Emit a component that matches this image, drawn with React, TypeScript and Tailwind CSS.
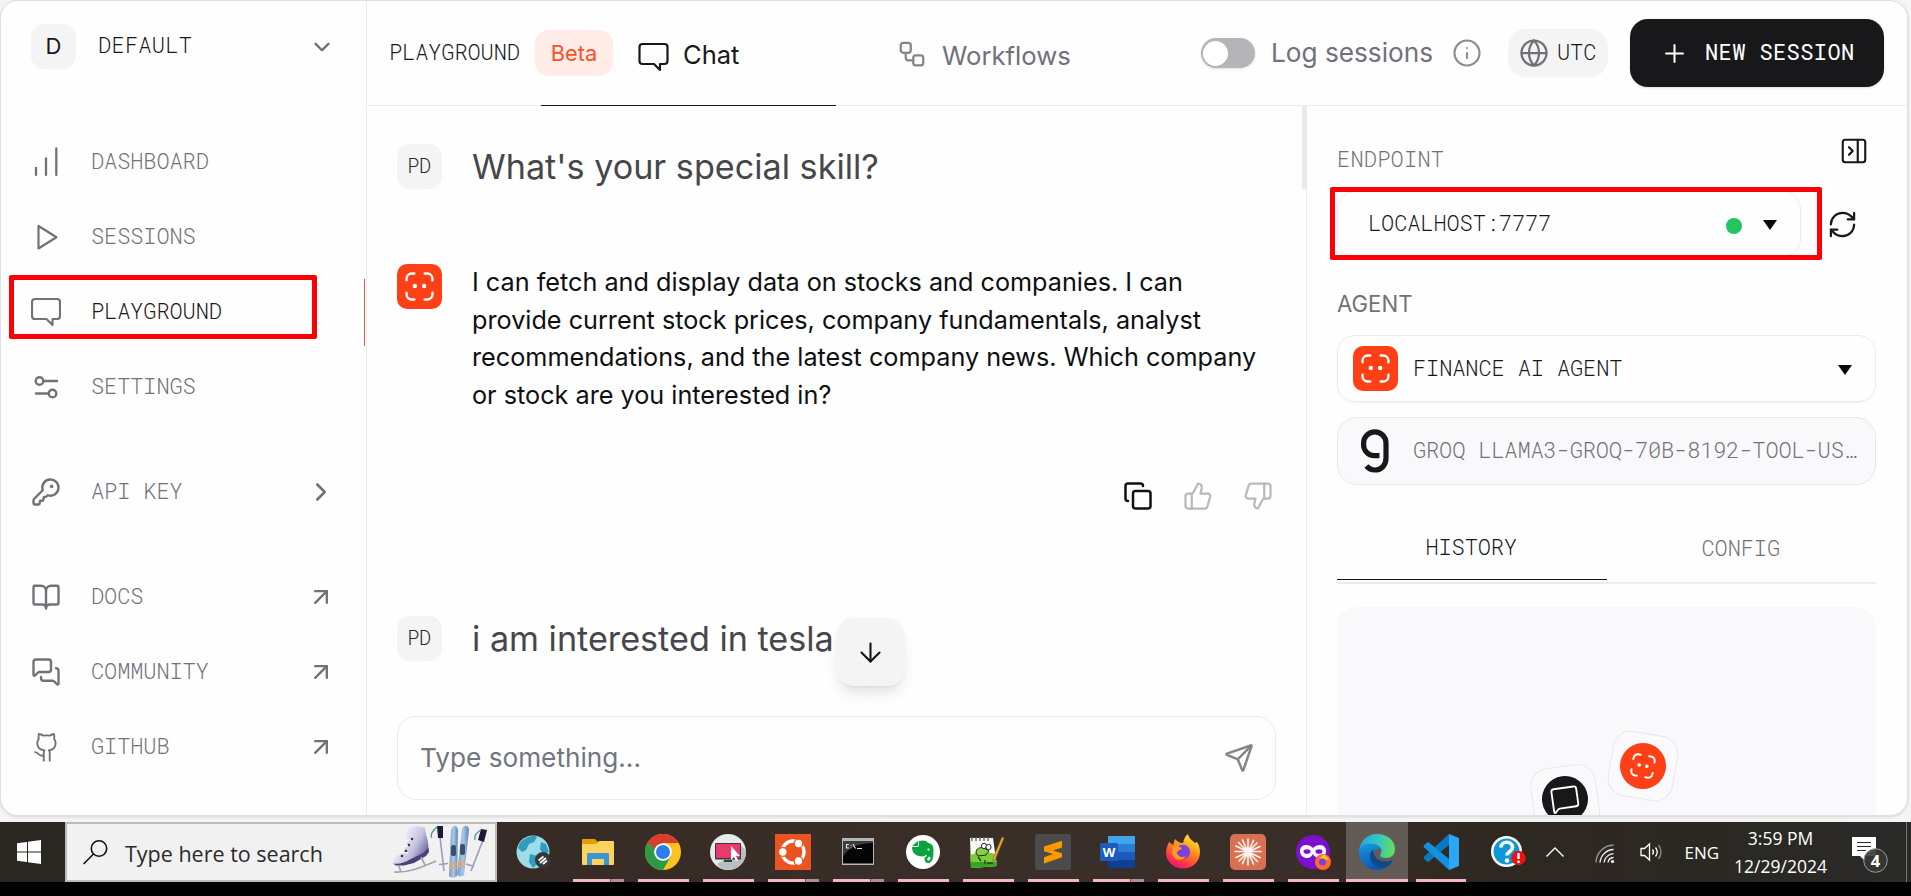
import type { ReactNode } from "react";
import {
  ArrowDown, ArrowUpRight, BookOpen, ChevronDown, ChevronRight, Copy, Globe, Info, KeyRound,
  MessagesSquare, MessageSquare, PanelRightClose, Plus, RefreshCw, Send, ThumbsDown, ThumbsUp, Workflow,
} from "lucide-react";

const mono = "[font-family:'Roboto_Mono','Liberation_Mono',monospace] font-[350] text-[22px] tracking-[-0.12px] leading-none whitespace-nowrap";

function FaceGlyph({ className }: { className: string }) {
  return (
    <svg viewBox="0 0 28 28" className={className} fill="none" stroke="white" strokeWidth="2.3" strokeLinecap="round">
      <path d="M1.5 8V6.5a5 5 0 0 1 5-5H9M19 1.5h2.500a5 5 0 0 1 5 5V8M26.500 20v1.500a5 5 0 0 1-5 5H19M9 26.500H6.500a5 5 0 0 1-5-5V20" />
      <circle cx="9.500" cy="13.500" r="2.100" fill="white" stroke="none" />
      <circle cx="18.500" cy="13.500" r="2.100" fill="white" stroke="none" />
    </svg>
  );
}

function AgentBadge() {
  return (
    <div className="flex h-[45px] w-[45px] shrink-0 items-center justify-center rounded-[10px] bg-[#ff4017]">
      <FaceGlyph className="h-[29px] w-[29px]" />
    </div>
  );
}

function Bubble({ className }: { className: string }) {
  return (
    <svg viewBox="0 0 30 30" className={className} fill="none" stroke="currentColor" strokeWidth="2.2" strokeLinejoin="round" strokeLinecap="round">
      <path d="M4 2h22a3 3 0 0 1 3 3v14a3 3 0 0 1-3 3h-4.500v6l-6-6H4a3 3 0 0 1-3-3V5a3 3 0 0 1 3-3Z" />
    </svg>
  );
}

function Bars() {
  return (
    <svg viewBox="0 0 30 30" className="h-[30px] w-[30px]" fill="none" stroke="currentColor" strokeWidth="2.3" strokeLinecap="round">
      <path d="M5 21v7M15 11.500V28M25.300 1.500V28" />
    </svg>
  );
}

function PlayOutline() {
  return (
    <svg viewBox="0 0 30 30" className="h-[30px] w-[30px]" fill="none" stroke="currentColor" strokeWidth="2.200" strokeLinejoin="round">
      <path d="M7.500 4v22.500L25.500 15.300Z" />
    </svg>
  );
}

function Sliders() {
  return (
    <svg viewBox="0 0 30 30" className="h-[30px] w-[30px]" fill="none" stroke="currentColor" strokeWidth="2.4" strokeLinecap="round">
      <circle cx="8.500" cy="9" r="3.800" />
      <path d="M12.300 9H26M5 21.500h13" />
      <circle cx="21.500" cy="21.500" r="3.800" />
    </svg>
  );
}

function Octocat() {
  return (
    <svg viewBox="0 0 24 24" className="h-[30px] w-[30px]" fill="none" stroke="currentColor" strokeWidth="1.500" strokeLinecap="round" strokeLinejoin="round">
      <path d="M10.200 23v-6.500c0-1 .2-1.400.6-1.800C7 14.300 5 12.300 5 8.800c0-1.500.5-2.500 1.200-3.300C5.900 4.300 6 3 6.300 1.600c1.500.1 2.600.7 3.600 1.300a13 13 0 0 1 5 0c1-.6 2-1.200 3.500-1.300.4 1.400.4 2.700.1 3.900.8.8 1.200 1.800 1.200 3.300 0 3.500-2 5.500-5.400 5.900.4.400.7.800.7 1.800V23M10.200 18.800c-2 .500-3.300-.1-4.200-1.200-.7-.9-1.200-1.400-2.700-1.500" />
    </svg>
  );
}

function Triangle() {
  return <svg viewBox="0 0 14 10" className="h-[10px] w-[14px] shrink-0" fill="#09090b"><path d="M0 0h14L7 10Z" /></svg>;
}

function NavRow({ icon, label, end, active, space = "" }: { icon: ReactNode; label: string; end?: ReactNode; active?: boolean; space?: string }) {
  return (
    <div className={`relative flex h-[75px] shrink-0 items-center pr-[35px] pl-[30px] text-[#71717a] ${space}`}>
      <span className="flex w-[30px] shrink-0">{icon}</span>
      <span className={`ml-[30px] flex-1 pb-px ${mono} ${active ? "text-[#18181b]" : ""}`}>{label}</span>
      {end}
      {active && <span className="absolute top-[5px] right-px h-[67px] w-[1.5px] bg-[#dd5a3a]" />}
      {active && <span className="absolute top-px left-[8px] h-[64px] w-[308px] rounded-[2px] border-[5px] border-[#fb0007]" />}
    </div>
  );
}

const ne = <ArrowUpRight className="-mr-1 h-7 w-7" strokeWidth={2} />;

function Sidebar() {
  return (
    <aside className="flex w-[366px] shrink-0 flex-col border-r border-[#ececee]">
      <div className="mt-[23px] flex h-[45px] items-center pr-[33px] pl-[30px]">
        <div className="flex h-[45px] w-[45px] items-center justify-center rounded-[13px] bg-[#f4f4f5] font-['Inter',sans-serif] text-[22px] text-[#18181b]">D</div>
        <span className={`ml-[22px] flex-1 text-[#18181b] ${mono} pb-1 [letter-spacing:0.25px]`}>DEFAULT</span>
        <ChevronDown className="-mr-[2px] h-[26px] w-[26px] text-[#6b6b73]" strokeWidth={2.200} />
      </div>
      <nav className="mt-[55px] flex flex-col">
        <NavRow icon={<Bars />} label="DASHBOARD" />
        <NavRow icon={<PlayOutline />} label="SESSIONS" />
        <NavRow icon={<Bubble className="h-[30px] w-[30px]" />} label="PLAYGROUND" active />
        <NavRow icon={<Sliders />} label="SETTINGS" />
        <NavRow space="mt-[30px]" icon={<KeyRound className="h-[30px] w-[30px]" strokeWidth={1.900} />} label="API KEY" end={<ChevronRight className="-mr-[5px] h-[30px] w-[30px]" strokeWidth={2.100} />} />
        <NavRow space="mt-[30px]" icon={<BookOpen className="h-[30px] w-[30px]" strokeWidth={1.900} />} label="DOCS" end={ne} />
        <NavRow icon={<MessagesSquare className="h-[30px] w-[30px]" strokeWidth={1.900} />} label="COMMUNITY" end={ne} />
        <NavRow icon={<Octocat />} label="GITHUB" end={ne} />
      </nav>
    </aside>
  );
}

function Header() {
  return (
    <header className="relative flex h-[105px] shrink-0 items-start border-b border-[#ececee] pl-[22px] font-['Inter',sans-serif]">
      <span className={`mt-[40px] w-[146px] text-[#18181b] ${mono}`}>PLAYGROUND</span>
      <span className="mt-[29px] flex h-[46px] w-[78px] items-center justify-center rounded-[14px] bg-[#ffece7] text-[21.800px] text-[#f9502b]">Beta</span>
      <Bubble className="mt-[41px] ml-[25px] h-[30px] w-[31px] text-[#18181b]" />
      <span className="mt-[35px] ml-[14px] w-[200px] text-[25.5px] leading-[38px] text-[#18181b]">Chat</span>
      <Workflow className="mt-[38px] ml-[14px] h-[30px] w-[30px] text-[#71717a] opacity-85" strokeWidth={1.800} />
      <span className="mt-[36px] ml-[15px] w-[259px] text-[25.700px] leading-[38px] text-[#71717a]">Workflows</span>
      <span className="mt-[37px] flex h-[30px] w-[54px] shrink-0 items-center rounded-full bg-[#b4b4b9] px-[2px] shadow-sm">
        <span className="h-[25px] w-[25px] rounded-full bg-white" />
      </span>
      <span className="mt-[33px] ml-[16px] w-[180px] text-[26.200px] leading-[38px] whitespace-nowrap text-[#71717a]">Log sessions</span>
      <Info className="mt-[37px] ml-[1px] h-[30px] w-[30px] shrink-0 text-[#8a8a92]" strokeWidth={1.700} />
      <span className="mt-[28px] ml-[26px] flex h-[48px] w-[100px] shrink-0 items-center rounded-[18px] bg-[#f4f4f5] pl-[11px]">
        <Globe className="h-[30px] w-[30px] text-[#71717a]" strokeWidth={1.800} />
        <span className={`ml-[8px] text-[#18181b] ${mono} pb-0.5`}>UTC</span>
      </span>
      <button className="mt-[18px] ml-[22px] flex h-[68px] w-[254px] shrink-0 items-center rounded-[18px] bg-[#18181b] pl-[30px] text-white shadow-sm">
        <Plus className="h-[29px] w-[29px]" strokeWidth={1.700} />
        <span className={`ml-[16px] ${mono} pb-0.5 [font-weight:400] [letter-spacing:0.4px]`}>NEW SESSION</span>
      </button>
      <span className="absolute -bottom-px left-[174px] h-px w-[295px] bg-[#18181b]" />
    </header>
  );
}

function UserMessage({ text }: { text: string }) {
  return (
    <div className="flex h-[45px] items-center">
      <div className="flex h-[45px] w-[45px] items-center justify-center rounded-[13px] bg-[#f4f4f5]">
        <span className="pr-px pb-[3px] [font-family:'Roboto_Mono','Liberation_Mono',monospace] text-[20px] leading-none font-[350] tracking-[-0.2px] text-[#27272a]">PD</span>
      </div>
      <span className="ml-[30px] text-[34.180px] leading-[45px] whitespace-nowrap text-[#47474b]">{text}</span>
    </div>
  );
}

function Chat() {
  return (
    <section className="relative flex w-[940px] shrink-0 flex-col border-r border-[#ececee] pl-[30px] font-['Inter',sans-serif]">
      <div className="mt-[38px] h-[45px]"><UserMessage text="What's your special skill?" /></div>
      <div className="mt-[75px] flex">
        <AgentBadge />
        <p className="ml-[30px] text-[25.230px] leading-[37.500px] whitespace-nowrap text-[#0f0f11]">
          I can fetch and display data on stocks and companies. I can<br />
          provide current stock prices, company fundamentals, analyst<br />
          recommendations, and the latest company news. Which company<br />
          or stock are you interested in?
        </p>
      </div>
      <div className="mt-[67px] flex justify-end gap-[30px] pr-[33px]">
        <Copy className="h-[30px] w-[30px] text-[#111113]" strokeWidth={2} />
        <ThumbsUp className="h-[30px] w-[30px] text-[#b9b9bc]" strokeWidth={1.800} />
        <ThumbsDown className="h-[30px] w-[30px] text-[#b9b9bc]" strokeWidth={1.800} />
      </div>
      <div className="mt-[105px] h-[45px]"><UserMessage text="i am interested in tesla" /></div>
      <div className="mt-[55px] flex h-[84px] w-[879px] items-center justify-between rounded-[19px] border border-[#ebebed] pr-[21px] pl-[22px]">
        <span className="pb-px text-[26.200px] text-[#71757f]">Type something...</span>
        <Send className="h-[30px] w-[30px] text-[#85858a]" strokeWidth={2} />
      </div>
      <button className="absolute top-[512px] left-[469px] flex h-[68px] w-[69px] items-center justify-center rounded-[18px] bg-[#f4f4f5] shadow-lg">
        <ArrowDown className="h-[31px] w-[31px] text-[#111113]" strokeWidth={1.600} />
      </button>
      <span className="absolute top-0 right-0 h-[83px] w-[4px] bg-[#e9e9eb]" />
    </section>
  );
}

function PanelSide() {
  return (
    <section className="flex flex-1 flex-col overflow-hidden pr-[31px] pl-[30px] text-[#18181b]">
      <div className="mt-[30px] flex h-[30px] justify-between">
        <span className={`mt-[12px] text-[#71717a] ${mono} [letter-spacing:0.2px]`}>ENDPOINT</span>
        <PanelRightClose className="mr-[7px] h-[30px] w-[30px]" strokeWidth={1.700} />
      </div>
      <div className="relative mt-[25px] flex h-[66px] items-center">
        <div className="flex h-[66px] w-[464px] items-center rounded-[18px] border border-[#ebebed] pl-[30px]">
          <span className={`w-[358px] ${mono} pb-[3px]`}>LOCALHOST:7777</span>
          <span className="mt-[3px] h-[16px] w-[16px] rounded-full bg-[#22c55e]" />
          <span className="mt-px ml-[21px]"><Triangle /></span>
        </div>
        <RefreshCw className="ml-[26px] h-[31px] w-[31px]" strokeWidth={1.700} />
        <span className="absolute -top-[4px] -left-[7px] h-[73px] w-[492px] rounded-[2px] border-[5px] border-[#fb0007]" />
      </div>
      <span className="mt-[34px] font-['Inter',sans-serif] text-[22.200px] leading-[26px] text-[#71717a]">AGENT</span>
      <div className="mt-[18px] flex h-[67px] shrink-0 items-center rounded-[18px] border border-[#ebebed] pr-[23px] pl-[15px] shadow-[0_1px_2px_rgba(0,0,0,0.05)]">
        <AgentBadge />
        <span className={`ml-[15px] flex-1 pb-px ${mono}`}>FINANCE AI AGENT</span>
        <span className="pt-[3px]"><Triangle /></span>
      </div>
      <div className="mt-[15px] flex h-[68px] shrink-0 items-center rounded-[20px] border border-[#e7e7ea] bg-[#f9f9fb] pl-[21px]">
        <svg viewBox="0 0 30 44" className="h-[44px] w-[32px]" fill="none" stroke="#18181b" strokeWidth="5.200">
          <path d="M19.500 26.700H14.500A11 11 0 0 1 3.600 15V14a11.200 11.200 0 0 1 22.400 0V29c0 7-4.500 12-11 12-3.700 0-6.500-1.500-8.600-4" />
        </svg>
        <span className={`ml-[22px] pb-[3px] text-[#71717a] ${mono} [letter-spacing:-0.15px]`}>GROQ LLAMA3-GROQ-70B-8192-TOOL-US…</span>
      </div>
      <div className="mt-[40px] flex h-[59px] shrink-0 border-b-2 border-[#ececee]">
        <div className={`flex h-[55px] w-1/2 justify-center border-b border-[#18181b] pt-[11px] pr-px ${mono}`}>HISTORY</div>
        <div className={`flex h-[55px] w-1/2 justify-center pt-[12px] pr-px text-[#71717a] ${mono}`}>CONFIG</div>
      </div>
      <div className="relative mt-[23px] flex-1 overflow-hidden rounded-t-[20px] bg-[#f9f9fb]">
        <div className="absolute top-[126px] left-[273px] flex h-[66px] w-[66px] rotate-[10deg] items-center justify-center rounded-[18px] border border-[#e8e8ea] bg-[#fafafc]">
          <div className="flex h-[46px] w-[46px] shrink-0 items-center justify-center rounded-full bg-[#ff4017]"><FaceGlyph className="h-[24px] w-[24px]" /></div>
        </div>
        <div className="absolute top-[159px] left-[195px] flex h-[66px] w-[66px] -rotate-[8deg] items-center justify-center rounded-[18px] border border-[#e8e8ea] bg-[#fafafc]">
          <div className="flex h-[46px] w-[46px] shrink-0 items-center justify-center rounded-full bg-[#18181b]"><MessageSquare className="h-[30px] w-[30px] text-white" strokeWidth={1.500} /></div>
        </div>
      </div>
    </section>
  );
}

function SkatesArt() {
  return (
    <svg viewBox="0 0 98 54" className="h-[54px] w-[98px]">
      <defs>
        <linearGradient id="boot" x1="0" y1="0.200" x2="1" y2="0.800"><stop offset="0.200" stopColor="#f1f0fa" /><stop offset="0.600" stopColor="#c3c0de" /><stop offset="0.850" stopColor="#7d77ad" /><stop offset="1" stopColor="#2b2450" /></linearGradient>
        <linearGradient id="ski" x1="0" x2="1"><stop offset="0" stopColor="#6f9cc9" /><stop offset="0.500" stopColor="#a9c8e6" /><stop offset="1" stopColor="#5d86b3" /></linearGradient>
      </defs>
      <path d="M15 3c6-2.500 13-2 19 0 0 6 4 12 3.500 22l-5 6-13 7-15 2C1 37 2 33 8 30c5-3 8-8 8-15 0-5-2-8-1-12Z" fill="url(#boot)" />
      <path d="M2 38.500c6 1 12-1 17-4l13-6.500 5.500-5 .5 4-3 4-12 7-10 2.500H5Z" fill="#4b4377" />
      <path d="M3 47c15 1 28-5 42-11M8 41l2 6.500M30 32l4 8" stroke="#a3a3aa" strokeWidth="1.700" fill="none" />
      <path d="M15 16l7-2M13 21l7-1M9 27l8 1" stroke="#fff" strokeWidth="1.300" />
      <circle cx="21" cy="14" r="1.300" fill="#37325c" /><circle cx="18" cy="20" r="1.300" fill="#37325c" /><circle cx="15" cy="26" r="1.300" fill="#37325c" /><circle cx="11" cy="31" r="1.300" fill="#37325c" />
      <path d="M49 12l4 34M48 39.500l9-1" stroke="#9c9fc0" strokeWidth="1.700" />
      <path d="M46 1l6 0 0 12-5 0Z" fill="#1d1c35" /><path d="M46 2c-6 5-7 8-5 11" stroke="#3f8f94" strokeWidth="1.200" fill="none" />
      <path d="M92 15L80 46M75 39l8 2.500" stroke="#9c9fc0" strokeWidth="1.700" />
      <path d="M90 4l6 1-3 12-6-2Z" fill="#1d1c35" /><path d="M90 5c-5 3-7 7-6 10" stroke="#3f8f94" strokeWidth="1.200" fill="none" />
      <path d="M60 5c2-6 6-5 7 0l-1 46c-2 2-6 2-8 0Z" fill="url(#ski)" />
      <path d="M71 4c2-5 7-4 7 1l-5 45c-2 2-6 2-7-1Z" fill="url(#ski)" />
      <rect x="60" y="20" width="5" height="11" rx="2" fill="#3b4f70" /><rect x="69" y="19" width="5" height="11" rx="2" fill="#3b4f70" />
      <path d="M58.500 39h7M58.500 43h7M67 37h7M67 41h7" stroke="#f2a263" strokeWidth="2.200" />
    </svg>
  );
}

const icons: Record<string, ReactNode> = {
  globe: <>
    <circle cx="18" cy="18" r="16.500" fill="#9fdbe9" />
    <path d="M8 6c5-4 12-5 14-3l-3 5-5 2-3 6-4 2-4-4c1-4 2-6 5-8ZM15 20l8 2 1 6-6 6-4-6ZM26 8l5 2 3 8-6 2-3-5Z" fill="#2f9dbb" />
    <circle cx="28" cy="26" r="8" fill="#35373a" /><path d="M23.500 26.500l5-4M25 29l6-5M28 30l4-3.500" stroke="#fff" strokeWidth="1.700" />
  </>,
  folder: <>
    <path d="M2 6q0-1 1-1h12l3 3h15q1 0 1 1v21H2Z" fill="#dfa000" /><path d="M2 10h14l3-3h14q1 0 1 1v22q0 1-1 1H3q-1 0-1-1Z" fill="#fdd35e" />
    <path d="M8 19h20q1 0 1 1v11h-5v-6H12v6H7V20q0-1 1-1Z" fill="#3b94d6" />
  </>,
  chrome: <>
    <circle cx="18" cy="18" r="18" fill="#fcc31e" /><path d="M2.400 9A18 18 0 0 0 18 36l7.800-13.500L10.200 22.500Z" fill="#2a9a48" />
    <path d="M2.400 9l7.800 13.500L18 9Z" fill="#2a9a48" /><path d="M2.400 9A18 18 0 0 1 33.600 9H18a9 9 0 0 0-8 5Z" fill="#dc3b2d" />
    <circle cx="18" cy="18" r="8.800" fill="#fff" /><circle cx="18" cy="18" r="7" fill="#2f7cf0" />
  </>,
  remote: <>
    <circle cx="18" cy="18" r="18" fill="#e9eaeb" /><path d="M30 10l6 7a18 18 0 0 1-18 19c-5 0-9-3-11-6l8-5Z" fill="#b9bfc2" />
    <rect x="5" y="9" width="26" height="16.500" rx="1" fill="#343a40" /><rect x="6" y="10" width="24" height="14" fill="#ea3a6a" /><path d="M14 26h8v2h-8Z" fill="#343a40" />
    <path d="M21 12v14l3-3 2 4 2-1-2-4h4Z" fill="#fff" />
  </>,
  ubuntu: <>
    <rect width="36" height="36" fill="#e95420" /><circle cx="18" cy="18" r="11" fill="none" stroke="#fff" strokeWidth="3.300" />
    <circle cx="7.800" cy="18" r="5" fill="#e95420" /><circle cx="23.500" cy="9.500" r="5" fill="#e95420" /><circle cx="23.500" cy="27" r="5" fill="#e95420" />
    <circle cx="7.800" cy="18" r="3.700" fill="#fff" /><circle cx="23.500" cy="9.500" r="3.700" fill="#fff" /><circle cx="23.500" cy="27" r="3.700" fill="#fff" />
  </>,
  cmd: <>
    <rect x="2" y="4" width="32" height="27" fill="#b5b8bb" /><rect x="3" y="7" width="30" height="22.500" fill="#050505" /><path d="M3 7h30v2C18 9 9 14 3 22Z" fill="#3c3c3c" />
    <path d="M9 10.500H6.500v3.500H9M11 11v.8M11 13.500v.8M13 10l2.500 4.500M17 14.500h5" stroke="#e6e6e6" strokeWidth="1.100" fill="none" />
  </>,
  evernote: <>
    <circle cx="18" cy="18" r="17" fill="#fff" />
    <path d="M14 7c5-1.500 8 0 9 2 4 .5 5.500 3 5.500 7 0 6-.5 13-5 13-3 0-4-2-4-4s1.500-3 3.500-2.500l0 1.800c-1.500 0-1.500 2.200.5 2.200 1.500 0 2-1.500 2-3.500-3 0-4-1-4.500-2.500-1 2-3.500 2.500-7 1.500C9 21 7 17 7 13h5q2 0 2-2Z" fill="#0aa33c" /><path d="M7 12l6-5v4q0 1-1 1Z" fill="#0aa33c" /><circle cx="23.500" cy="15.500" r="1.100" fill="#fff" />
  </>,
  notepad: <>
    <path d="M0 4l23 0 4 28-26 2Z" fill="#f7f9f5" /><path d="M.500 21c8-4 18-3 24.500-1l2 12-26 2Z" fill="#7ccd3a" /><path d="M1 28l25.500 0 .5 4-26 2Z" fill="#35a622" />
    <path d="M2 3v4M6 3v4M10 3v4M14 3v4M18 3v4" stroke="#6b6b6b" strokeWidth="1.500" />
    <path d="M6 19c0-5 4-6 8-5l5 3-3 4-8 1Z" fill="#84d13c" stroke="#222" strokeWidth="1" /><circle cx="14" cy="12" r="2.600" fill="#fff" stroke="#222" /><circle cx="18.500" cy="13" r="2.600" fill="#fff" stroke="#222" />
    <path d="M15 26v4M17 29h6M8 23l3 4" stroke="#223f15" strokeWidth="1.300" /><path d="M32 3l2 1-9 22-2 1 0-3Z" fill="#f0a83c" stroke="#8b5a1c" strokeWidth="0.600" />
  </>,
  sublime: <>
    <rect width="36" height="36" rx="2" fill="#4b4b4b" /><path d="M9 12.500l18-5.700v6.700l-9 3 9 2.700v4L9 29.500v-6.300l9-3.200-9-2.800Z" fill="#ff9800" />
  </>,
  word: <>
    <path d="M8 2h26q1 0 1 1v7H8Z" fill="#41a5ee" /><path d="M8 10h27v8H8Z" fill="#2b7cd3" /><path d="M8 18h27v8H8Z" fill="#185abd" /><path d="M8 26h27v7q0 1-1 1H9q-1 0-1-1Z" fill="#103f91" />
    <rect x="0" y="9" width="18" height="18" rx="1.500" fill="#1c5cbe" /><text x="9" y="22.500" textAnchor="middle" fontSize="13" fontWeight="700" fontFamily="Open Sans, sans-serif" fill="#fff">W</text>
  </>,
  firefox: <>
    <defs><linearGradient id="fx" x1="0.800" y1="0" x2="0.300" y2="1"><stop offset="0.050" stopColor="#ffe92b" /><stop offset="0.450" stopColor="#ff8a1f" /><stop offset="0.800" stopColor="#ff3347" /><stop offset="1" stopColor="#e31587" /></linearGradient></defs>
    <path d="M4 8l4 3 2-6c2 2 4 4 8 4 1-4 2-7 5-9 1 5 4 6 7 9l2-1c2 3 3 6 3 10 0 9-7 16.500-17 16.500S1 27 1 18.500C1 14 3 11 4 8Z" fill="url(#fx)" />
    <circle cx="18" cy="18" r="7.200" fill="#7b43d6" /><path d="M8 13c4-2 7 0 9 1-1 2-4 2-5 4 0 5 6 6 9 4-3 6-13 5-14-3Z" fill="#ff9a22" />
  </>,
  claude: <>
    <rect width="36" height="36" rx="5" fill="#d97052" />
    <path d="M18 5V31M5 17.500h26M8.500 8.500l19 19M27 9L9 27M12.500 6l11 24M23.500 6.500L12.500 29.500M6 12l24 11.500M6 23.500L30 12.500" stroke="#fbf3ee" strokeWidth="1.700" strokeLinecap="round" />
  </>,
  privatefox: <>
    <circle cx="18" cy="18" r="17" fill="#7d10cf" />
    <path d="M18 14c-2-2-4-3-7-3-4 0-6 3-6 6 0 4 3 7 7 7 3 0 5-2 6-4 1 2 3 4 6 4 4 0 7-3 7-7 0-3-2-6-6-6-3 0-5 1-7 3Z" fill="#fff" /><ellipse cx="12" cy="17.500" rx="3.500" ry="2.300" fill="#7d10cf" /><ellipse cx="24" cy="17.500" rx="3.500" ry="2.300" fill="#7d10cf" />
    <circle cx="28" cy="28" r="8" fill="#ff6a2e" /><path d="M22 22l3 2 4-4 5 5-4 2Z" fill="#ffc22b" /><circle cx="27.500" cy="28" r="3.600" fill="#7b43d6" />
  </>,
  edge: <>
    <defs>
      <linearGradient id="eg" x1="0" y1="0.400" x2="1" y2="0.500"><stop offset="0" stopColor="#2aa5dd" /><stop offset="0.500" stopColor="#31c5c4" /><stop offset="1" stopColor="#66e05b" /></linearGradient>
      <linearGradient id="eb" x1="0" y1="0" x2="0.300" y2="1"><stop offset="0" stopColor="#1b98dd" /><stop offset="1" stopColor="#0b58b4" /></linearGradient>
    </defs>
    <path d="M0 17C1 7 8 0 18 0c11 0 18 7 18 15 0 6-4 9-9 9-4 0-6-1-6-2.500 0-1 1.500-2 1.500-4.500 0-4-4-7-10-7C7 10 2 13 0 17Z" fill="url(#eg)" />
    <path d="M0 18c0-5 5-8.500 11-8.500 6 0 11 3 11.500 7-3-3-8-1-8.500 5-.4 8 7 13 14 12-4 2-7 2.500-10 2.500C8 36 0 28 0 18Z" fill="url(#eb)" />
    <path d="M11 22c0-3 1-5 3.500-6.500-1 7 5 12 12 12 3 0 5-1 6.500-1.500.7-.3 1 .2.700.700C31.500 31 28 34 24 34c-7 0-13-5-13-12Z" fill="#114a8b" />
  </>,
  vscode: <>
    <path d="M26 0v11L6 27.500q-1 .7-2 0l-3-2.700q-1-1 0-2Z" fill="#0b78c2" /><path d="M26 36V25L6 8.500q-1-.7-2 0L1 11.200q-1 1 0 2Z" fill="#1590dd" /><path d="M26 0l10 4v28l-10 4Z" fill="#2aa7f7" />
  </>,
};

const apps: { id: string; bar?: "one" | "many"; slot: string; barW: string }[] = [
  { id: "globe", slot: "w-[65px]", barW: "w-[51px]" },
  { id: "folder", bar: "many", slot: "w-[65px]", barW: "w-[51px]" },
  { id: "chrome", bar: "one", slot: "w-[65px]", barW: "w-[51px]" },
  { id: "remote", bar: "one", slot: "w-[65px]", barW: "w-[51px]" },
  { id: "ubuntu", bar: "many", slot: "w-[65px]", barW: "w-[51px]" },
  { id: "cmd", bar: "many", slot: "w-[65px]", barW: "w-[51px]" },
  { id: "evernote", bar: "one", slot: "w-[65px]", barW: "w-[51px]" },
  { id: "notepad", bar: "one", slot: "w-[65px]", barW: "w-[51px]" },
  { id: "sublime", bar: "one", slot: "w-[65px]", barW: "w-[51px]" },
  { id: "word", bar: "many", slot: "w-[65px]", barW: "w-[51px]" },
  { id: "firefox", bar: "one", slot: "w-[65px]", barW: "w-[51px]" },
  { id: "claude", bar: "one", slot: "w-[65px]", barW: "w-[51px]" },
  { id: "privatefox", bar: "one", slot: "w-[65px]", barW: "w-[51px]" },
  { id: "edge", bar: "one", slot: "w-[62px] bg-[#625b56]", barW: "w-[62px]" },
  { id: "vscode", bar: "one", slot: "w-[66px]", barW: "w-[50px]" },
];

function Taskbar() {
  return (
    <footer className="flex h-[60px] shrink-0 bg-[linear-gradient(90deg,#29271f_0%,#29271f_4%,#362c25_28%,#3a2f28_50%,#3a2f28_68%,#2e2820_78%,#2b2822_88%,#2a2a29_100%)] font-['Open_Sans','Noto_Sans',sans-serif] text-white">
      <div className="flex w-[65px] items-center pl-[17px]">
        <svg viewBox="0 0 24 24" className="h-[24px] w-[24px]" fill="#fff"><path d="M0 3.300L10 2v9.500H0ZM11 1.800L24 0v11.500H11ZM0 12.500h10V22L0 20.700ZM11 12.500h13V24l-13-1.800Z" /></svg>
      </div>
      <div className="flex w-[432px] items-center border-2 border-[#bbb] bg-[#f1f1f1] pl-[16px]">
        <svg viewBox="0 0 25 25" className="h-[25px] w-[25px]" fill="none" stroke="#111" strokeWidth="1.600"><circle cx="16" cy="8.500" r="7.700" /><path d="M10.500 14L.600 24" /></svg>
        <span className="mt-[3px] ml-[17px] w-[266px] text-[21.500px] leading-[30px] text-[#2a2a2a]">Type here to search</span>
        <SkatesArt />
      </div>
      <div className="ml-[3.500px] flex">
        {apps.map((a) => (
          <div key={a.id} className={`relative flex items-center justify-center ${a.slot}`}>
            <svg viewBox="0 0 36 36" className="h-[36px] w-[36px]">{icons[a.id]}</svg>
            {a.bar && (
              <span className={`absolute bottom-0 flex h-[3px] bg-[#f4b6c0] ${a.barW}`}>
                {a.bar === "many" && <span className="ml-auto h-[3px] w-[14px] border-l border-[#6e565a] bg-[#b58c93]" />}
              </span>
            )}
          </div>
        ))}
      </div>
      <div className="flex flex-1 items-center">
        <svg viewBox="0 0 36 34" className="ml-[16px] h-[34px] w-[36px]">
          <circle cx="16.500" cy="16.500" r="15.500" fill="#fff" /><circle cx="16.500" cy="16.500" r="13" fill="#0d96d8" />
          <path d="M11 12.500c0-7 11.500-7 11.500 0 0 4-5.500 4-5.500 8" fill="none" stroke="#fff" strokeWidth="3.600" /><circle cx="17" cy="25.500" r="2.300" fill="#fff" />
          <circle cx="28.500" cy="23" r="7.200" fill="#ee1111" /><path d="M28.500 18v6" stroke="#fff" strokeWidth="2.400" /><circle cx="28.500" cy="26.800" r="1.400" fill="#fff" />
        </svg>
        <svg viewBox="0 0 18 10" className="ml-[20px] h-[10px] w-[18px]" fill="none" stroke="#fff" strokeWidth="1.400"><path d="M.500 9.500L9 1l8.500 8.500" /></svg>
        <svg viewBox="0 0 20 20" className="ml-[31px] mt-1 h-[20px] w-[20px]" fill="none" strokeWidth="1.300"><path d="M1 18.500A18 18 0 0 1 18.500 1" stroke="#9a9894" /><path d="M5 18.500A14 14 0 0 1 18.500 5.500M9 18.500a10 10 0 0 1 9.500-8.800M13 18.500a6 6 0 0 1 5.500-5" stroke="#eee" /><circle cx="17.500" cy="17.500" r="1.600" fill="#fff" /></svg>
        <svg viewBox="0 0 23 20" className="ml-[25px] h-[20px] w-[23px]" fill="none" stroke="#fff" strokeWidth="1.300"><path d="M1 6.500h3.500L9.500 2v16L4.500 13.500H1Z" /><path d="M12.500 7.500q2 2.500 0 5M15.500 5.500q3.500 4.500 0 9" /><path d="M18.500 3q5 7 0 14" stroke="#8c8a87" /></svg>
        <span className="ml-[22px] w-[47px] text-[17px] leading-none">ENG</span>
        <div className="flex w-[98px] flex-col items-center text-[17.500px] leading-[28px] whitespace-nowrap">
          <span>3:59 PM</span>
          <span>12/29/2024</span>
        </div>
        <svg viewBox="0 0 38 38" className="mt-[5px] ml-[21px] h-[38px] w-[38px]">
          <path d="M1 1h24v19H14.500v5.500L9 20H1Z" fill="#fff" /><path d="M6 6.500h14M6 10.500h14M6 14.500h9" stroke="#2a2a29" strokeWidth="1.200" />
          <circle cx="24.500" cy="24.500" r="11.800" fill="#373736" fillOpacity="0.900" stroke="#9c9c9c" strokeWidth="1" />
          <text x="24.500" y="30.500" textAnchor="middle" fontSize="16.500" fontWeight="700" fontFamily="Open Sans, sans-serif" fill="#fff">4</text>
        </svg>
        <span className="mr-[4px] ml-auto h-full w-[1.500px] bg-[#777]" />
      </div>
    </footer>
  );
}

export default function App() {
  return (
    <div className="flex h-[896px] w-[1911px] flex-col overflow-hidden bg-black">
      <div className="flex h-[822px] shrink-0 bg-[#f4f4f5]">
        <div className="flex h-[816px] w-[1908px] overflow-hidden rounded-[18px] border border-[#e0e0e3] bg-[#fefefe] shadow-[0_1px_3px_rgba(0,0,0,0.12)]">
          <Sidebar />
          <div className="flex flex-1 flex-col">
            <Header />
            <div className="flex flex-1 overflow-hidden">
              <Chat />
              <PanelSide />
            </div>
          </div>
        </div>
      </div>
      <Taskbar />
    </div>
  );
}
